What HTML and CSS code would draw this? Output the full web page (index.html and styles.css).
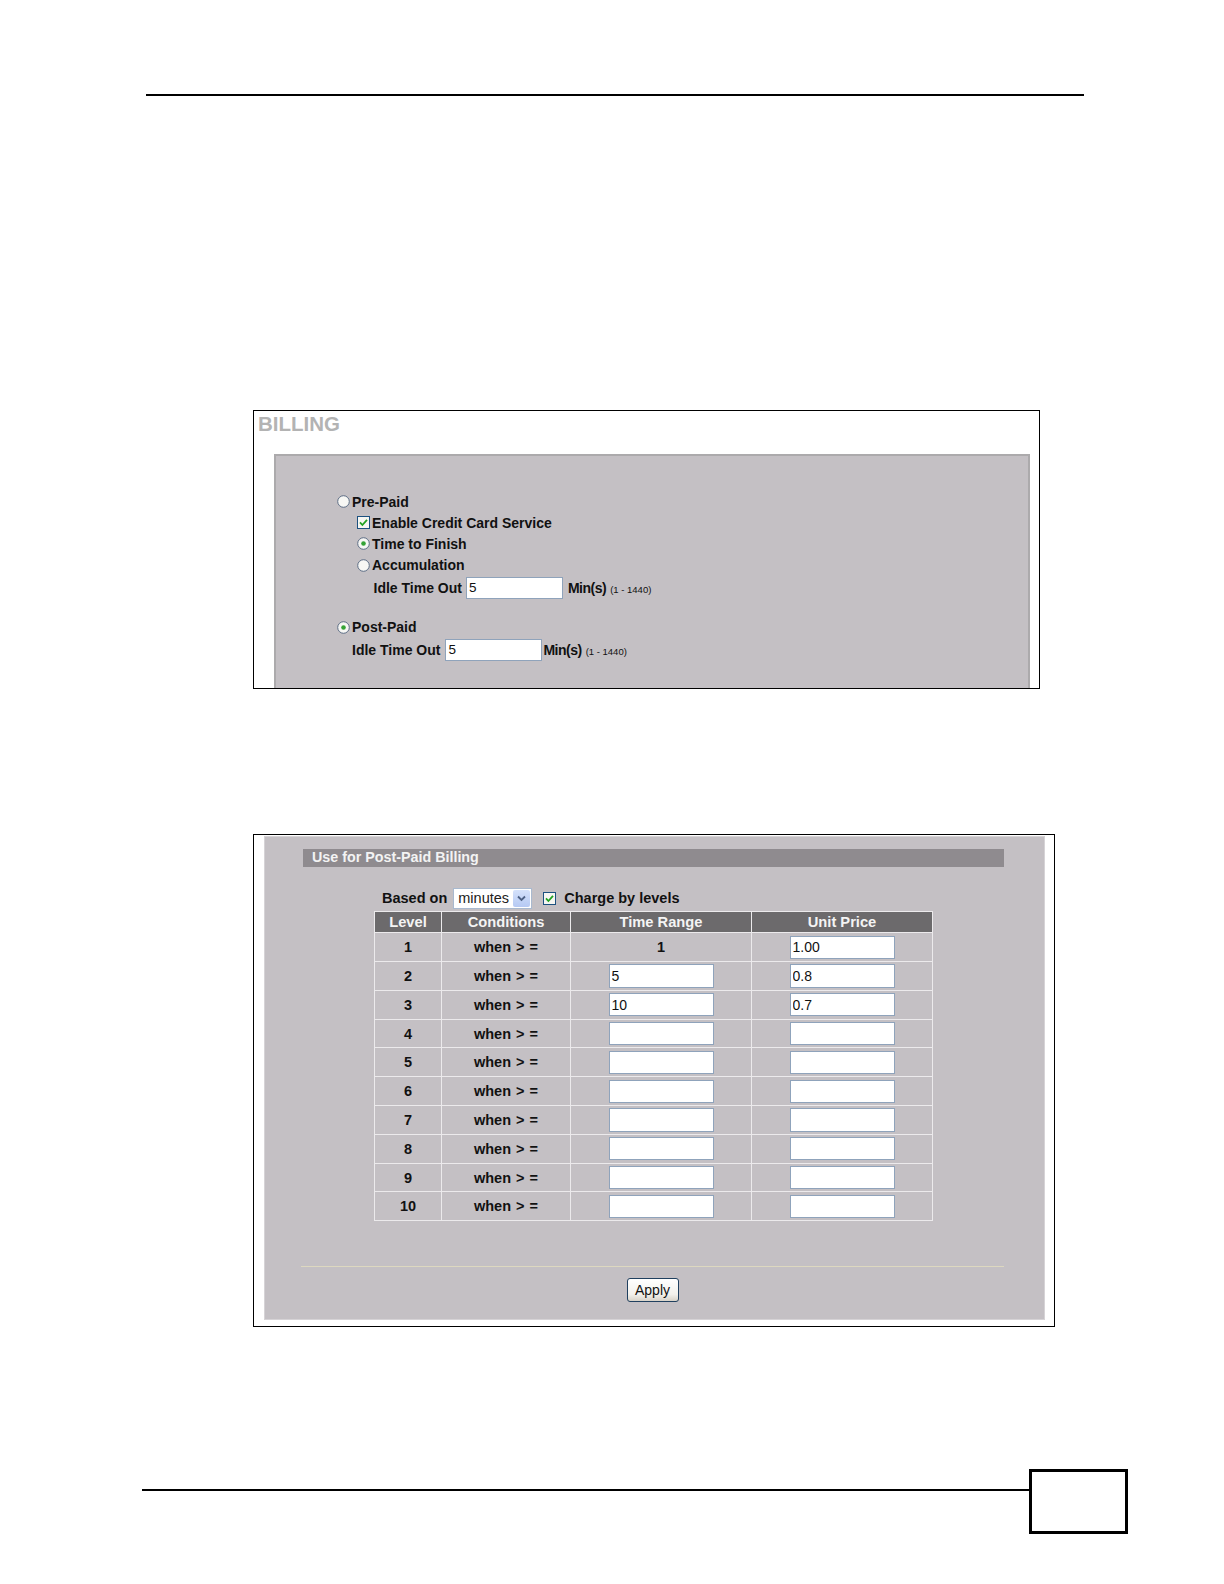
FILE: index.html
```html
<!DOCTYPE html>
<html>
<head>
<meta charset="utf-8">
<title>Billing</title>
<link rel="stylesheet" href="styles.css">
</head>
<body>
<div class="page">
  <div class="topline"></div>

  <section class="panel1">
    <div class="title">BILLING</div>
    <div class="gbox">
      <div class="row">
        <span class="ctl"><svg width="13" height="13" viewBox="0 0 13 13"><circle cx="6.5" cy="6.5" r="5.8" fill="#f7f7f4" stroke="#5d6e86"/></svg></span>
        <span>Pre-Paid</span>
      </div>
      <div class="row ind">
        <span class="ctl"><svg width="13" height="13" viewBox="0 0 13 13"><rect x="0.5" y="0.5" width="12" height="12" fill="#f6f6f2" stroke="#1c5180"/><path d="M3 6.4 L5.4 9 L10 3.8" fill="none" stroke="#21a121" stroke-width="1.8"/></svg></span>
        <span>Enable Credit Card Service</span>
      </div>
      <div class="row ind">
        <span class="ctl"><svg width="13" height="13" viewBox="0 0 13 13"><circle cx="6.5" cy="6.5" r="5.8" fill="#f7f7f4" stroke="#5d6e86"/><circle cx="6.5" cy="6.5" r="2.3" fill="#35a335"/></svg></span>
        <span>Time to Finish</span>
      </div>
      <div class="row ind">
        <span class="ctl"><svg width="13" height="13" viewBox="0 0 13 13"><circle cx="6.5" cy="6.5" r="5.8" fill="#f7f7f4" stroke="#5d6e86"/></svg></span>
        <span>Accumulation</span>
      </div>
      <div class="row idle idle-pre">
        <span>Idle Time Out</span>
        <input class="tx tx-pre" type="text" value="5">
        <span class="unit">Min(s)</span><span class="rng">(1 - 1440)</span>
      </div>
      <div class="row post">
        <span class="ctl"><svg width="13" height="13" viewBox="0 0 13 13"><circle cx="6.5" cy="6.5" r="5.8" fill="#f7f7f4" stroke="#5d6e86"/><circle cx="6.5" cy="6.5" r="2.3" fill="#35a335"/></svg></span>
        <span>Post-Paid</span>
      </div>
      <div class="row idle idle-post">
        <span>Idle Time Out</span>
        <input class="tx tx-post" type="text" value="5">
        <span class="unit">Min(s)</span><span class="rng">(1 - 1440)</span>
      </div>
    </div>
  </section>

  <section class="panel2">
    <div class="p2in">
      <div class="bar">Use for Post-Paid Billing</div>
      <div class="based">
        <span>Based on</span>
        <div class="sel">
          <span class="sel-txt">minutes</span>
          <span class="sel-btn"><svg width="9" height="7" viewBox="0 0 9 7"><path d="M1 1.5 L4.5 5 L8 1.5" fill="none" stroke="#4d6185" stroke-width="1.8"/></svg></span>
        </div>
        <span class="ctl chk2"><svg width="13" height="13" viewBox="0 0 13 13"><rect x="0.5" y="0.5" width="12" height="12" fill="#f6f6f2" stroke="#1c5180"/><path d="M3 6.4 L5.4 9 L10 3.8" fill="none" stroke="#21a121" stroke-width="1.8"/></svg></span>
        <span>Charge by levels</span>
      </div>
      <table class="lv">
        <colgroup>
          <col class="w-level"><col class="w-cond"><col class="w-range"><col class="w-price">
        </colgroup>
        <thead>
          <tr><th>Level</th><th>Conditions</th><th>Time Range</th><th>Unit Price</th></tr>
        </thead>
        <tbody>
          <tr><td>1</td><td>when &gt; =</td><td>1</td><td><input class="cell" type="text" value="1.00"></td></tr>
          <tr><td>2</td><td>when &gt; =</td><td><input class="cell" type="text" value="5"></td><td><input class="cell" type="text" value="0.8"></td></tr>
          <tr><td>3</td><td>when &gt; =</td><td><input class="cell" type="text" value="10"></td><td><input class="cell" type="text" value="0.7"></td></tr>
          <tr><td>4</td><td>when &gt; =</td><td><input class="cell" type="text" value=""></td><td><input class="cell" type="text" value=""></td></tr>
          <tr><td>5</td><td>when &gt; =</td><td><input class="cell" type="text" value=""></td><td><input class="cell" type="text" value=""></td></tr>
          <tr><td>6</td><td>when &gt; =</td><td><input class="cell" type="text" value=""></td><td><input class="cell" type="text" value=""></td></tr>
          <tr><td>7</td><td>when &gt; =</td><td><input class="cell" type="text" value=""></td><td><input class="cell" type="text" value=""></td></tr>
          <tr><td>8</td><td>when &gt; =</td><td><input class="cell" type="text" value=""></td><td><input class="cell" type="text" value=""></td></tr>
          <tr><td>9</td><td>when &gt; =</td><td><input class="cell" type="text" value=""></td><td><input class="cell" type="text" value=""></td></tr>
          <tr><td>10</td><td>when &gt; =</td><td><input class="cell" type="text" value=""></td><td><input class="cell" type="text" value=""></td></tr>
        </tbody>
      </table>
      <div class="sep"></div>
      <div class="actions"><button class="btn" type="button">Apply</button></div>
    </div>
  </section>

  <div class="footer">
    <div class="fline"></div>
    <div class="fbox"></div>
  </div>
</div>
</body>
</html>
```

FILE: styles.css
```css
html, body {
  margin: 0;
  padding: 0;
  background: #fff;
}
body {
  font-family: "Liberation Sans", Arial, sans-serif;
  color: #111;
}
.page {
  width: 1224px;
  height: 1584px;
  box-sizing: border-box;
  padding-top: 94px;
  overflow: hidden;
}
.topline {
  margin-left: 146px;
  width: 938px;
  border-top: 2px solid #000;
}

/* Panel 1 */
.panel1 {
  margin: 314px 0 0 253px;
  width: 787px;
  height: 279px;
  box-sizing: border-box;
  border: 1px solid #000;
  background: #fff;
  padding-left: 4px;
  overflow: hidden;
}
.title {
  height: 25px;
  line-height: 25px;
  font-size: 20.5px;
  font-weight: bold;
  color: #b3b3b3;
}
.gbox {
  margin: 18px 0 0 16px;
  width: 756px;
  height: 270px;
  box-sizing: border-box;
  border: 2px solid #acaaac;
  border-bottom: none;
  background: #c4c0c4;
  padding: 35px 0 0 61px;
}
.row {
  display: flex;
  align-items: center;
  height: 21.2px;
  font-size: 14px;
  font-weight: bold;
  white-space: nowrap;
}
.ctl {
  display: flex;
  margin-right: 2px;
}
.ctl svg {
  display: block;
}
.ind {
  padding-left: 20px;
}
.idle {
  height: 23.5px;
}
.idle-pre {
  padding-left: 36.5px;
}
.idle-post {
  padding-left: 15px;
}
.post {
  margin-top: 17.5px;
}
.tx {
  width: 97px;
  height: 22px;
  box-sizing: border-box;
  border: 1px solid #8fa3bb;
  background: #fff;
  font-family: "Liberation Sans", Arial, sans-serif;
  font-size: 13.5px;
  color: #111;
  padding: 0 2px;
  margin: 0;
}
.tx-pre {
  margin: 0 5px 0 4px;
}
.tx-post {
  margin: 0 1px 0 5px;
}
.unit {
  font-weight: bold;
  letter-spacing: -0.5px;
}
.rng {
  font-size: 9.5px;
  font-weight: normal;
  margin: 3px 0 0 4px;
}

/* Panel 2 */
.panel2 {
  margin: 145px 0 0 253px;
  width: 802px;
  height: 493px;
  box-sizing: border-box;
  border: 1px solid #000;
  background: #fff;
  padding: 1px 9px 6px 10px;
}
.p2in {
  height: 100%;
  box-sizing: border-box;
  background: #c4c0c4;
  border: 1px solid #d6d3d6;
  padding-top: 12px;
}
.bar {
  margin-left: 38px;
  width: 701px;
  height: 17.5px;
  box-sizing: border-box;
  padding-left: 9px;
  background: #8f8b8f;
  color: #f3f3f3;
  font-size: 14.3px;
  font-weight: bold;
  line-height: 17.5px;
}
.based {
  display: flex;
  align-items: center;
  height: 21.5px;
  margin: 21px 0 0 117px;
  font-size: 14.5px;
  font-weight: bold;
  white-space: nowrap;
}
.sel {
  display: flex;
  align-items: stretch;
  width: 79px;
  height: 21.5px;
  box-sizing: border-box;
  margin-left: 6px;
  border: 1px solid #a9b9cf;
  background: #fff;
}
.sel-txt {
  flex: 1;
  font-size: 14.5px;
  font-weight: normal;
  line-height: 19px;
  padding-left: 4px;
  color: #222;
}
.sel-btn {
  width: 17px;
  margin: 1px;
  display: flex;
  align-items: center;
  justify-content: center;
  background: linear-gradient(#d4e1fb, #b5c9f3);
  border-radius: 2px;
}
.chk2 {
  margin-left: 11px;
  margin-right: 8px;
}

.lv {
  margin: 2px 0 0 109px;
  border-collapse: collapse;
  table-layout: fixed;
  width: 558px;
  border: 1px solid #eceaec;
}
.w-level { width: 67px; }
.w-cond { width: 129px; }
.w-range { width: 181px; }
.w-price { width: 181px; }
.lv th {
  height: 20.3px;
  padding: 0;
  background: #6c6a6c;
  color: #f4f4f4;
  font-size: 14.7px;
  font-weight: bold;
  border: 1px solid #eceaec;
  text-align: center;
}
.lv td {
  height: 27.8px;
  padding: 0;
  border: 1px solid #eceaec;
  text-align: center;
  font-size: 14.5px;
  font-weight: bold;
  word-spacing: 1px;
  color: #111;
}
.cell {
  display: block;
  margin: 0 auto;
  width: 105px;
  height: 23.3px;
  box-sizing: border-box;
  border: 1px solid #8fa3bb;
  background: #fff;
  font-family: "Liberation Sans", Arial, sans-serif;
  font-size: 14px;
  color: #111;
  padding: 0 2px;
}
.sep {
  margin: 45px 0 0 36px;
  width: 703px;
  border-top: 1px solid #ddd8c0;
}
.actions {
  margin-left: 36px;
  width: 703px;
  display: flex;
  justify-content: center;
  padding-top: 10.5px;
}
.btn {
  width: 52px;
  height: 24.5px;
  padding: 0;
  border: 1px solid #20405f;
  border-radius: 3px;
  background: linear-gradient(#ffffff, #f2f1ec 70%, #d8d3c8);
  font-family: "Liberation Sans", Arial, sans-serif;
  font-size: 14px;
  color: #111;
}

/* Footer */
.footer {
  display: flex;
  align-items: flex-start;
  margin: 142px 0 0 142px;
}
.fline {
  width: 887px;
  margin-top: 20px;
  border-top: 2px solid #000;
}
.fbox {
  width: 99px;
  height: 65px;
  box-sizing: border-box;
  border: 3px solid #000;
}
```
